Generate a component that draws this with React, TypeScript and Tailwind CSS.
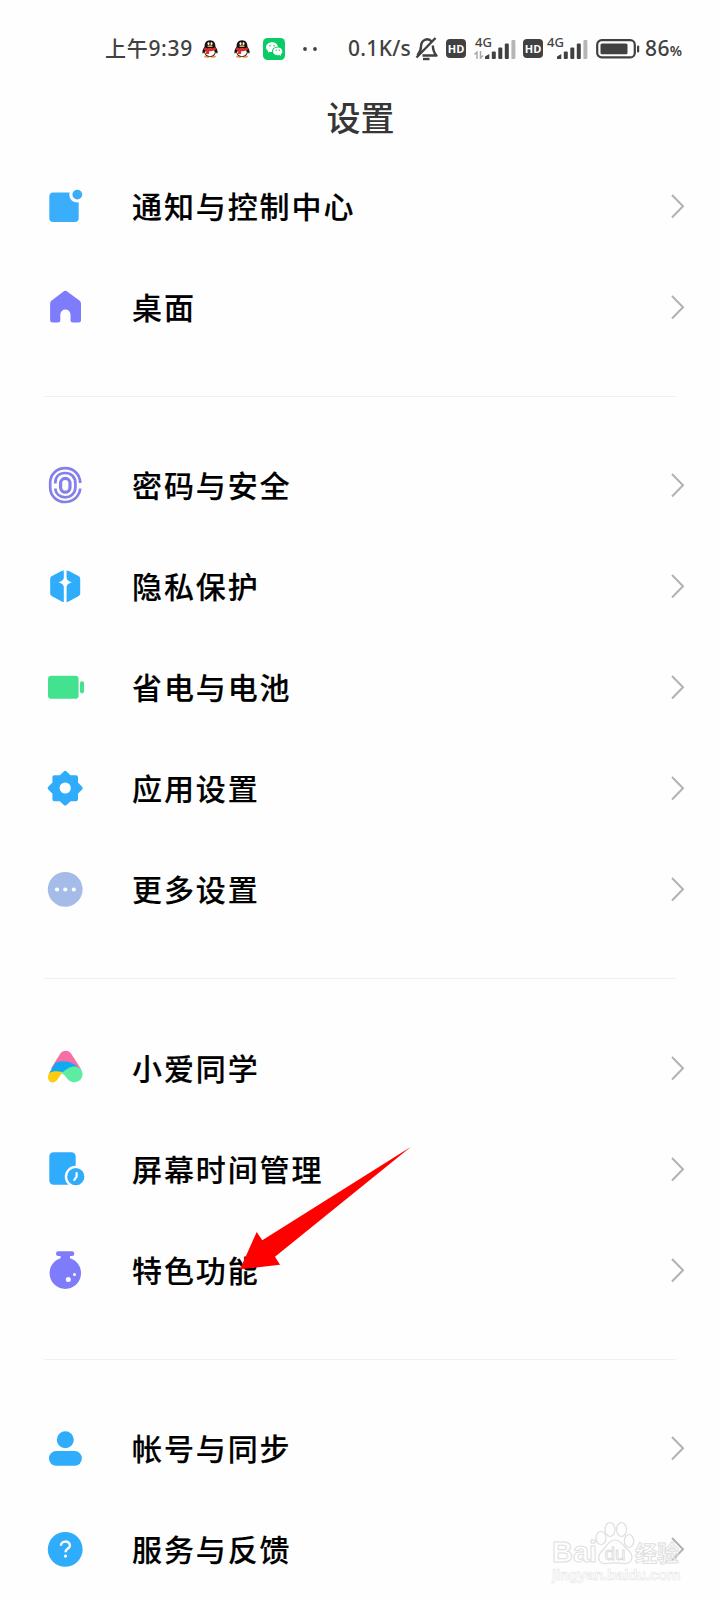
import { ReactNode } from "react";

const sky = "#30acfc";
const violet = "#7f7cfb";

const icons: Record<string, ReactNode> = {
  notify: (
    <>
      <rect x="4.3" y="6.4" width="29.4" height="29.6" rx="4" fill="#3aaefa" />
      <circle cx="32.3" cy="8.6" r="8" fill="#fefefe" />
      <circle cx="32.3" cy="8.6" r="4.9" fill="#3aaefa" />
    </>
  ),
  home: (
    <path
      fill={violet}
      d="M18.2 4.7a3.4 3.4 0 0 1 4.3 0L34.4 13.6a3.8 3.8 0 0 1 1.6 3.1V33a2.5 2.5 0 0 1-2.5 2.5H28a2.5 2.5 0 0 1-2.5-2.5V27.6a5.1 5.1 0 0 0-10.2 0V33a2.5 2.5 0 0 1-2.5 2.5H7.6A2.5 2.5 0 0 1 5.1 33V16.7a3.8 3.8 0 0 1 1.6-3.1Z"
    />
  ),
  finger: (
    <g fill="none" stroke="#8480ea" strokeWidth="2.7">
      <path d="M35.2 18C35 9 28.5 3.2 20.2 3.2S5.2 9 5.2 17.5V22.5C5.2 31 12 37 20.2 37 28 37 34.5 31.5 35.2 23.5" />
      <path d="M10.2 18.5C10.2 12 14.2 8 20.2 8S30.4 12 30.4 18.5V22C30.4 28 26.2 32.3 20.2 32.3 15 32.3 10.8 29 10.2 23.5" />
      <rect x="15.6" y="13.4" width="9.4" height="13.8" rx="4.7" strokeWidth="3.2" />
    </g>
  ),
  privacy: (
    <>
      <path
        fill={sky}
        d="M18.8 4.4V36C18 36 17.5 35.8 16.8 35.4L7 30.2C5.7 29.5 5.2 28.7 5.2 27.3V13C5.2 11.6 5.7 10.8 7 10L16.5 5C17.3 4.6 18 4.4 18.8 4.4ZM21.6 4.4V36C22.4 36 23 35.8 23.6 35.4L33.4 30.2C34.6 29.5 35.2 28.7 35.2 27.3V13C35.2 11.6 34.6 10.8 33.4 10L23.9 5C23.1 4.6 22.4 4.4 21.6 4.4Z"
      />
      <path fill="#fefefe" d="M20.2 8C21.4 13.5 22.5 14.8 27 16.3 22.5 17.8 21.4 19.2 20.2 24.5 19 19.2 17.9 17.8 13.4 16.3 17.9 14.8 19 13.5 20.2 8Z" />
    </>
  ),
  battery: (
    <g fill="#43e28e">
      <rect x="3" y="8.8" width="30.6" height="23" rx="3.4" />
      <rect x="35" y="14.2" width="4" height="12.2" rx="1.8" />
    </g>
  ),
  gear: (
    <>
      <path
        fill={sky}
        stroke={sky}
        strokeWidth="4"
        strokeLinejoin="round"
        d="M20.2 4.9 24.7 9.2H31V15.5L35.7 20.2 31 24.9V31.2H24.7L20.2 35.5 15.7 31.2H9.4V24.9L4.7 20.2 9.4 15.5V9.2H15.7Z"
      />
      <circle cx="20.2" cy="20" r="5.6" fill="#fefefe" />
    </>
  ),
  more: (
    <>
      <circle cx="20.2" cy="20.3" r="17.4" fill="#a6bce8" />
      <g fill="#fefefe">
        <circle cx="12" cy="20.5" r="2.1" />
        <circle cx="20.3" cy="20.5" r="2.1" />
        <circle cx="28.8" cy="20.5" r="2.1" />
      </g>
    </>
  ),
  xiaoai: (
    <>
      <path fill="#f76da5" d="M15.2 5.7C17.6 1.700 23.800 1.700 26.200 5.700L36.300 21.500 20 24 6 20.500Z" />
      <path fill="#fecb10" d="M4.2 25 7.5 20.5 18 23.5 12.5 31.5C10 35 6.2 35.2 4.2 33 2.6 31 2.6 28 4.2 25Z" />
      <path fill="#12a9f3" d="M10.2 15C15.500 12 25 12.600 30.500 17L34 20.500 27.500 27 20 25.500C14.500 22.500 8.500 22.800 4.100 25.200Z" />
      <path fill="#5ceca2" d="M16.8 25.500C21.500 19.800 29 16.800 34 19.800 38.800 22.800 38.600 29.500 34.500 32.600 30.800 35.300 25.800 34.600 23 31.500 21 29.300 19.500 26.500 16.800 25.500Z" />
    </>
  ),
  screen: (
    <>
      <rect x="4.3" y="3.2" width="26.4" height="32.6" rx="4.2" fill={sky} />
      <circle cx="30.8" cy="27.7" r="11" fill="#fefefe" />
      <circle cx="30.8" cy="27.7" r="8.6" fill={sky} />
      <path d="M31.6 24.2V27.7L29.3 30.8" fill="none" stroke="#fefefe" strokeWidth="2.2" strokeLinecap="round" strokeLinejoin="round" />
    </>
  ),
  flask: (
    <>
      <g fill={violet}>
        <rect x="11" y="1.2" width="18.3" height="4.8" rx="2.3" />
        <path d="M15.6 4H25V11H15.600Z" />
        <circle cx="20.3" cy="23.2" r="15.7" />
      </g>
      <circle cx="23.3" cy="29.4" r="2.5" fill="#fefefe" />
      <circle cx="29.5" cy="24.4" r="1.5" fill="#fefefe" />
    </>
  ),
  account: (
    <g fill={sky}>
      <circle cx="20.3" cy="11.7" r="8.5" />
      <rect x="4" y="23.1" width="32.8" height="14.6" rx="7" />
    </g>
  ),
  help: (
    <>
      <circle cx="20.2" cy="20.4" r="17.4" fill={sky} />
      <path d="M15.9 16.7C15.9 11.2 24.9 11.3 24.9 16.4 24.9 19.7 20.6 19.4 20.6 23.2" fill="none" stroke="#fefefe" strokeWidth="2.4" />
      <circle cx="20.5" cy="27.1" r="1.6" fill="#fefefe" />
    </>
  )
};

const groups = [
  {
    divider: "mt-[39px] mb-[37px]",
    rows: [
      { icon: "notify", label: "通知与控制中心" },
      { icon: "home", label: "桌面" }
    ]
  },
  {
    divider: "mt-[39px] mb-[38px]",
    rows: [
      { icon: "finger", label: "密码与安全" },
      { icon: "privacy", label: "隐私保护" },
      { icon: "battery", label: "省电与电池" },
      { icon: "gear", label: "应用设置" },
      { icon: "more", label: "更多设置" }
    ]
  },
  {
    divider: "mt-[39px] mb-[37px]",
    rows: [
      { icon: "xiaoai", label: "小爱同学" },
      { icon: "screen", label: "屏幕时间管理" },
      { icon: "flask", label: "特色功能" }
    ]
  },
  {
    divider: "",
    rows: [
      { icon: "account", label: "帐号与同步" },
      { icon: "help", label: "服务与反馈" }
    ]
  }
];

function Penguin({ className }: { className: string }) {
  return (
    <svg viewBox="0 0 16 18" className={`h-[18px] w-4 shrink-0 ${className}`}>
      <ellipse cx="5" cy="16.6" rx="3" ry="1.2" fill="#e8962a" />
      <ellipse cx="11" cy="16.6" rx="3" ry="1.2" fill="#e8962a" />
      <path fill="#15110f" d="M8 .3c3.800 0 5.500 2.800 5.400 6.300 1 1.700 2.300 3.700 2.200 5.900-.1 1.300-.9 1.200-1.800-.2-.6 3.200-2.800 4.500-5.800 4.500s-5.200-1.300-5.800-4.500c-.9 1.400-1.700 1.500-1.800.2C.3 10.300 1.600 8.300 2.600 6.600 2.500 3.100 4.200.3 8 .3Z" />
      <ellipse cx="8" cy="12.3" rx="4.7" ry="3.9" fill="#fff" />
      <ellipse cx="6.5" cy="3.7" rx="1" ry="1.4" fill="#fff" />
      <ellipse cx="9.5" cy="3.7" rx="1" ry="1.4" fill="#fff" />
      <ellipse cx="8" cy="6.2" rx="2.8" ry=".9" fill="#eda23a" />
      <path fill="#dc2b2c" d="M2.6 7.2c3 1.600 7.800 1.600 10.800 0l.9 2.400c-2.500 1.500-5 1.800-7.200 1.700v2.600H4.100v-3.400l-2.500-.9Z" />
    </svg>
  );
}

function Wechat() {
  return (
    <svg viewBox="0 0 22 22" className="ml-[13px] h-[22px] w-[22px] shrink-0">
      <rect width="22" height="22" rx="4.5" fill="#0acb66" />
      <path fill="#fff" d="M9 4.2c3.200 0 5.700 1.900 6 4.500-3.400-.1-6 1.900-6 4.700v.6c-.8 0-1.500-.1-2.200-.3l-2 1.100.5-1.800C3.900 12.100 3 10.800 3 9.200c0-2.800 2.700-5 6-5Z" />
      <path fill="#fff" d="M14.7 9.5c2.600 0 4.600 1.700 4.600 3.900 0 1.200-.6 2.300-1.600 3l.4 1.500-1.700-.9c-.5.200-1.100.3-1.700.3-2.600 0-4.700-1.700-4.700-3.900s2.100-3.900 4.700-3.900Z" />
      <g fill="#0acb66">
        <circle cx="7" cy="7.8" r=".8" />
        <circle cx="11" cy="7.8" r=".8" />
        <circle cx="13.2" cy="12.3" r=".7" />
        <circle cx="16.3" cy="12.3" r=".7" />
      </g>
    </svg>
  );
}

function HdBadge({ className }: { className: string }) {
  return (
    <span className={`flex h-[19px] w-5 shrink-0 items-center justify-center rounded-[4px] bg-[#414141] font-['Open_Sans',sans-serif] text-[11px] leading-none font-bold text-white ${className}`}>
      HD
    </span>
  );
}

function Signal({ className, data }: { className: string; data?: boolean }) {
  return (
    <span className={`flex h-[24px] shrink-0 ${className}`}>
      <span className="relative z-10 flex w-[18px] flex-col">
        <span className="-mt-px text-[13px] leading-[12px] font-medium">4G</span>
        {data ? (
          <svg viewBox="0 0 10 8" className="mt-[3px] -ml-px h-[8px] w-[10px]" fill="none" stroke="#aaa" strokeWidth="1.5">
            <path d="M3 8V1L.5 3.500M6.500 0V7L9 4.500" />
          </svg>
        ) : null}
      </span>
      <svg viewBox="0 0 32 24" className="-ml-[8px] h-[24px] w-8 shrink-0" fill="#414141">
        <path d="M0 22V19.500L4.300 17V22Z" />
        <rect x="6.8" y="14.5" width="4" height="7.5" rx="1" />
        <rect x="13.3" y="10.5" width="4" height="11.5" rx="1" />
        <rect x="19.8" y="6.5" width="4" height="15.5" rx="1" />
        <rect x="26.4" y="3" width="4" height="19" rx="1" fill="#b6b6b6" />
      </svg>
    </span>
  );
}

function StatusBar() {
  return (
    <div className="flex h-[97px] items-center pl-[105px] text-[21px] font-medium text-[#414141]">
      <span className="w-[90px] shrink-0 tracking-[0.7px] whitespace-nowrap">上午9:39</span>
      <Penguin className="ml-[7px]" />
      <Penguin className="ml-4" />
      <Wechat />
      <svg viewBox="0 0 16 6" className="ml-[17px] h-[6px] w-4 shrink-0" fill="#414141">
        <circle cx="3" cy="3" r="1.9" />
        <circle cx="13" cy="3" r="1.9" />
      </svg>
      <span className="ml-[30px] w-[66px] shrink-0 tracking-[0.3px] whitespace-nowrap">0.1K/s</span>
      <svg viewBox="0 0 24 24" className="ml-px h-6 w-6 shrink-0" fill="none" stroke="#414141" strokeWidth="2.4" strokeLinejoin="round">
        <path d="M17 5C15 2.500 12 2 10 2.800 7 4 6 6.500 6 9.500 6 13.500 4.500 15.500 2.500 18.500M7.500 18.500H21.500C18.500 15.500 18 12.500 17.800 8.500M20.500 1 1.500 20.500" />
        <path d="M8 22H14.500" />
      </svg>
      <HdBadge className="ml-[7px]" />
      <Signal className="ml-[9px] w-[42px]" data />
      <HdBadge className="ml-[6px]" />
      <Signal className="ml-[4px] w-[42px]" />
      <svg viewBox="0 0 44 20" className="ml-[7px] h-5 w-11 shrink-0">
        <rect x="1.2" y="1.2" width="37.6" height="17.2" rx="4.5" fill="none" stroke="#414141" strokeWidth="2.2" />
        <rect x="4.5" y="4.6" width="27" height="10.6" rx="1.5" fill="#414141" />
        <rect x="41" y="6.5" width="2.2" height="7" rx="1" fill="#414141" />
      </svg>
      <span className="ml-[5px] tracking-[0.4px] whitespace-nowrap">
        86<span className="text-[14px] font-semibold">%</span>
      </span>
    </div>
  );
}

function Watermark() {
  return (
    <div className="absolute top-[1519px] left-[552px] w-[140px] text-transparent">
      <div className="flex h-[46px] items-end">
        <span className="w-[43px] font-['Liberation_Sans',sans-serif] text-[29px] leading-[26px] font-bold [-webkit-text-stroke:1px_#dedede]">Bai</span>
        <span className="relative flex h-[46px] w-[40px] items-end justify-center">
          <svg viewBox="0 0 40 46" className="absolute inset-0 h-[46px] w-10" fill="none" stroke="#dedede" strokeWidth="1.2">
            <ellipse cx="6" cy="19" rx="5" ry="6.5" />
            <ellipse cx="15" cy="10.5" rx="5" ry="7" />
            <ellipse cx="26.5" cy="10.5" rx="5" ry="7" />
            <ellipse cx="34" cy="22" rx="4.7" ry="6.5" />
            <path d="M20 21C14 21 12 27 8 31 1 37 3 45 11 44.500 16 43.800 24 43.800 29 44.500 37 45 40 37 33 31 28 27 26 21 20 21Z" />
          </svg>
          <span className="font-['Liberation_Sans',sans-serif] text-[19px] leading-[23px] [-webkit-text-stroke:1px_#dedede]">du</span>
        </span>
        <span className="font-['Noto_Sans_CJK_SC',sans-serif] text-[22px] leading-[28px] font-bold whitespace-nowrap [-webkit-text-stroke:1px_#dedede]">经验</span>
      </div>
      <div className="font-['Liberation_Sans',sans-serif] text-[15px] leading-[19px] font-bold tracking-[-0.2px] whitespace-nowrap text-[#fefefe] [-webkit-text-stroke:0.6px_#e6e6e6]">jingyan.baidu.com</div>
    </div>
  );
}

export default function App() {
  return (
    <div className="relative h-[1600px] w-[720px] overflow-hidden bg-[#fefefe] font-['Noto_Sans','Noto_Sans_CJK_SC',sans-serif]">
      <StatusBar />
      <h1 className="flex h-[58px] items-start justify-center pl-px font-['Noto_Sans_CJK_SC',sans-serif] text-[34px] leading-[40px] font-medium text-[#363636]">设置</h1>

      <main>
        {groups.map((group) => (
          <section key={group.rows[0].icon}>
            {group.rows.map((row) => (
              <div key={row.icon} className="flex h-[101px] items-center pr-[34px] pl-[45px]">
                <svg viewBox="0 0 40 40" className="h-10 w-10 shrink-0">
                  {icons[row.icon]}
                </svg>
                <span className="ml-[47px] flex-1 pb-px font-['Noto_Sans_CJK_SC',sans-serif] text-[30px] leading-none font-medium tracking-[1.9px] text-black [-webkit-text-stroke:0.15px_black]">
                  {row.label}
                </span>
                <svg viewBox="0 0 16 26" className="h-[26px] w-4 shrink-0" fill="none" stroke="#b2b2b2" strokeWidth="2">
                  <path d="M2 2 13 13.200 2 24.500" />
                </svg>
              </div>
            ))}
            {group.divider ? <div className={`mx-11 h-px bg-[#f0f0f0] ${group.divider}`} /> : null}
          </section>
        ))}
      </main>

      {/* pointer to the highlighted row */}
      <svg viewBox="0 0 172 126" className="absolute top-[1146px] left-[240px] h-[126px] w-[172px]" fill="#fe0000">
        <path d="M171 .7 22.3 94.3 16.7 86 0 123.300 40 118.700 35 110.700Z" />
      </svg>

      <Watermark />
    </div>
  );
}
